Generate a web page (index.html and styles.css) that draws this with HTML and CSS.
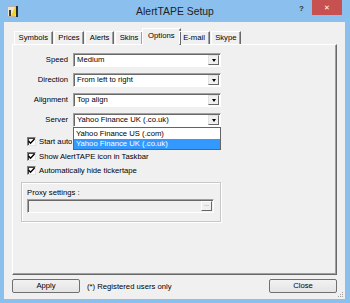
FILE: index.html
```html
<!DOCTYPE html>
<html lang="en">
<head>
    <meta charset="UTF-8">
    <title>AlertTAPE Setup</title>
    <link rel="stylesheet" href="styles.css">
</head>
<body>
    <div class="window">
        <div class="titlebar">
            <svg class="app-icon" width="11" height="11" viewBox="0 0 11 11">
                <rect x="0" y="0" width="11" height="11" fill="#b8b4a8"/>
                <rect x="1" y="1" width="9" height="9" fill="#e8e4d8"/>
                <polygon points="4,10 8,1 11,1 11,4 8,10" fill="#f2d21c"/>
                <rect x="2" y="4" width="2" height="6" fill="#3a3a3a"/>
                <rect x="9" y="0" width="2" height="11" fill="#2a2a2a"/>
            </svg>
            <div class="title">AlertTAPE Setup</div>
            <div class="controls">
                <div class="help">?</div>
                <div class="close">&#x2715;</div>
            </div>
        </div>
        <div class="client">
            <div class="tabs">
                <div class="tab">Symbols</div>
                <div class="tab">Prices</div>
                <div class="tab">Alerts</div>
                <div class="tab">Skins</div>
                <div class="tab active">Options</div>
                <div class="tab">E-mail</div>
                <div class="tab">Skype</div>
            </div>
            <div class="panel">
                <div class="fields">
                    <label>Speed</label>
                    <div class="combo"><span>Medium</span><b class="drop"><i></i></b></div>
                    <label>Direction</label>
                    <div class="combo"><span>From left to right</span><b class="drop"><i></i></b></div>
                    <label>Alignment</label>
                    <div class="combo"><span>Top align</span><b class="drop"><i></i></b></div>
                    <label>Server</label>
                    <div class="combo"><span>Yahoo Finance UK (.co.uk)</span><b class="drop"><i></i></b></div>
                </div>
                <div class="checks">
                    <div class="check"><span class="box"><svg width="7" height="7" viewBox="0 0 7 7"><polyline points="0.5,3 2.5,5.2 6.5,1" fill="none" stroke="#000" stroke-width="1.4"/></svg></span><span class="clipped">Start automatically with Windows</span></div>
                    <div class="check"><span class="box"><svg width="7" height="7" viewBox="0 0 7 7"><polyline points="0.5,3 2.5,5.2 6.5,1" fill="none" stroke="#000" stroke-width="1.4"/></svg></span>Show AlertTAPE icon in Taskbar</div>
                    <div class="check"><span class="box"><svg width="7" height="7" viewBox="0 0 7 7"><polyline points="0.5,3 2.5,5.2 6.5,1" fill="none" stroke="#000" stroke-width="1.4"/></svg></span>Automatically hide tickertape</div>
                </div>
                <div class="group">
                    <div class="group-label">Proxy settings :</div>
                    <div class="proxy">
                        <span class="proxy-field"></span>
                        <span class="proxy-btn">...</span>
                    </div>
                </div>
                <div class="droplist">
                    <div class="item">Yahoo Finance US (.com)</div>
                    <div class="item selected">Yahoo Finance UK (.co.uk)</div>
                </div>
            </div>
            <div class="buttons">
                <div class="btn">Apply</div>
                <div class="note">(*) Registered users only</div>
                <div class="btn close-btn">Close</div>
            </div>
            <svg class="grip" width="7" height="7" viewBox="0 0 7 7">
                <rect x="5" y="1" width="1" height="1" fill="#a0a0a0"/>
                <rect x="3" y="3" width="1" height="1" fill="#a0a0a0"/>
                <rect x="5" y="3" width="1" height="1" fill="#a0a0a0"/>
                <rect x="1" y="5" width="1" height="1" fill="#a0a0a0"/>
                <rect x="3" y="5" width="1" height="1" fill="#a0a0a0"/>
                <rect x="5" y="5" width="1" height="1" fill="#a0a0a0"/>
            </svg>
        </div>
    </div>
</body>
</html>
```

FILE: styles.css
```css
body {
    margin: 0;
    padding: 0;
    font-family: "Liberation Sans", Arial, sans-serif;
    font-size: 7.7px;
    color: #000;
}

.window {
    width: 350px;
    height: 303px;
    box-sizing: border-box;
    background-color: #8bc0ee;
    padding: 0 5px 4px 4px;
    display: flex;
    flex-direction: column;
}

.titlebar {
    height: 22px;
    margin: 0 -5px 0 -4px;
    display: grid;
    grid-template-columns: 1fr auto 1fr;
    align-items: start;
}

.app-icon {
    margin: 6px 0 0 7px;
}

.title {
    font-size: 10.4px;
    color: #222;
    line-height: 12px;
    margin-top: 6px;
}

.controls {
    display: flex;
    justify-content: flex-end;
    align-items: flex-start;
}

.help {
    font-size: 8px;
    font-weight: bold;
    color: #333;
    margin: 4px 8px 0 0;
}

.close {
    width: 30px;
    height: 15px;
    margin-right: 8px;
    background-color: #c75050;
    color: #fff;
    font-size: 7px;
    line-height: 15px;
    text-align: center;
}

.client {
    flex: 1;
    background-color: #f0f0f0;
    padding: 6px 8px 6px 8px;
    display: flex;
    flex-direction: column;
    position: relative;
}

.tabs {
    display: flex;
    align-items: flex-end;
    height: 16px;
    padding-left: 2px;
    position: relative;
    z-index: 1;
}

.tab {
    height: 12px;
    line-height: 12px;
    padding: 0 3.6px;
    border-top: 1px solid #fff;
    border-left: 1px solid #fff;
    border-right: 1px solid #696969;
    box-shadow: inset -1px 0 #a0a0a0;
    margin-right: 1px;
    white-space: nowrap;
}

.tab.active {
    height: 16px;
    line-height: 14px;
    padding: 0 5px;
    margin: 0 0 -1px -2px;
    background-color: #f0f0f0;
}

.tab.active + .tab {
    margin-left: -2px;
}

.panel {
    height: 231px;
    box-sizing: border-box;
    border-top: 1px solid #fff;
    border-left: 1px solid #fff;
    border-right: 1px solid #696969;
    border-bottom: 1px solid #696969;
    box-shadow: inset -1px -1px #a0a0a0;
    padding: 8px 0 0 0;
    position: relative;
}

.fields {
    display: grid;
    grid-template-columns: 55px 148px;
    column-gap: 5px;
    row-gap: 6px;
}

.fields label {
    text-align: right;
    line-height: 14px;
}

.combo {
    height: 14px;
    box-sizing: border-box;
    background-color: #fff;
    border-top: 1px solid #a0a0a0;
    border-left: 1px solid #a0a0a0;
    border-right: 1px solid #fff;
    border-bottom: 1px solid #fff;
    box-shadow: inset 1px 1px #696969;
    display: flex;
    align-items: center;
    justify-content: space-between;
}

.combo span {
    padding-left: 3px;
    line-height: 12px;
}

.drop {
    width: 11px;
    height: 10px;
    margin-right: 1px;
    box-sizing: border-box;
    background-color: #f0f0f0;
    border-top: 1px solid #e3e3e3;
    border-left: 1px solid #e3e3e3;
    border-right: 1px solid #696969;
    border-bottom: 1px solid #696969;
    display: flex;
    align-items: center;
    justify-content: center;
}

.drop i {
    width: 0;
    height: 0;
    border-left: 2.5px solid transparent;
    border-right: 2.5px solid transparent;
    border-top: 3px solid #000;
}

.checks {
    margin-top: 7.5px;
    padding-left: 14px;
}

.check {
    height: 14.5px;
    display: flex;
    align-items: center;
    white-space: nowrap;
}

.clipped {
    width: 33px;
    overflow: hidden;
}

.box {
    width: 9px;
    height: 9px;
    box-sizing: border-box;
    background-color: #fff;
    border-top: 1px solid #808080;
    border-left: 1px solid #808080;
    border-right: 1px solid #e3e3e3;
    border-bottom: 1px solid #e3e3e3;
    box-shadow: inset 1px 1px #404040;
    margin-right: 3px;
    display: flex;
    align-items: center;
    justify-content: center;
}

.group {
    margin: 4px 0 0 8px;
    width: 200px;
    height: 40px;
    box-sizing: border-box;
    border: 1px solid #c8c8c8;
    box-shadow: inset 1px 1px #fff, 1px 1px #fff;
    padding: 5px 0 0 5px;
}

.group-label {
    line-height: 10px;
}

.proxy {
    margin-top: 1px;
    width: 187px;
    height: 14px;
    box-sizing: border-box;
    border-top: 1px solid #a0a0a0;
    border-left: 1px solid #a0a0a0;
    border-right: 1px solid #fff;
    border-bottom: 1px solid #fff;
    box-shadow: inset 1px 1px #696969;
    background-color: #f0f0f0;
    display: flex;
    justify-content: flex-end;
    align-items: center;
}

.proxy-btn {
    width: 11px;
    height: 10px;
    margin-right: 1px;
    box-sizing: border-box;
    border-top: 1px solid #fff;
    border-left: 1px solid #fff;
    border-right: 1px solid #696969;
    border-bottom: 1px solid #696969;
    font-size: 6px;
    line-height: 5px;
    text-align: center;
    color: #6d6d6d;
}

.droplist {
    position: absolute;
    left: 60px;
    top: 82px;
    width: 148px;
    box-sizing: border-box;
    background-color: #fff;
    border: 1px solid #646464;
}

.item {
    height: 11px;
    line-height: 11px;
    padding-left: 2px;
    white-space: nowrap;
}

.item.selected {
    height: 10px;
    line-height: 10px;
    background-color: #3399ff;
    color: #fff;
}

.buttons {
    margin-top: 4px;
    display: flex;
    align-items: center;
}

.btn {
    width: 68px;
    height: 14px;
    box-sizing: border-box;
    border: 1px solid #707070;
    border-radius: 2px;
    background: linear-gradient(#f2f2f2, #e4e4e4);
    text-align: center;
    line-height: 12px;
}

.note {
    margin-left: 7px;
}

.close-btn {
    margin-left: auto;
}

.grip {
    position: absolute;
    right: 1px;
    bottom: 1px;
}
```
